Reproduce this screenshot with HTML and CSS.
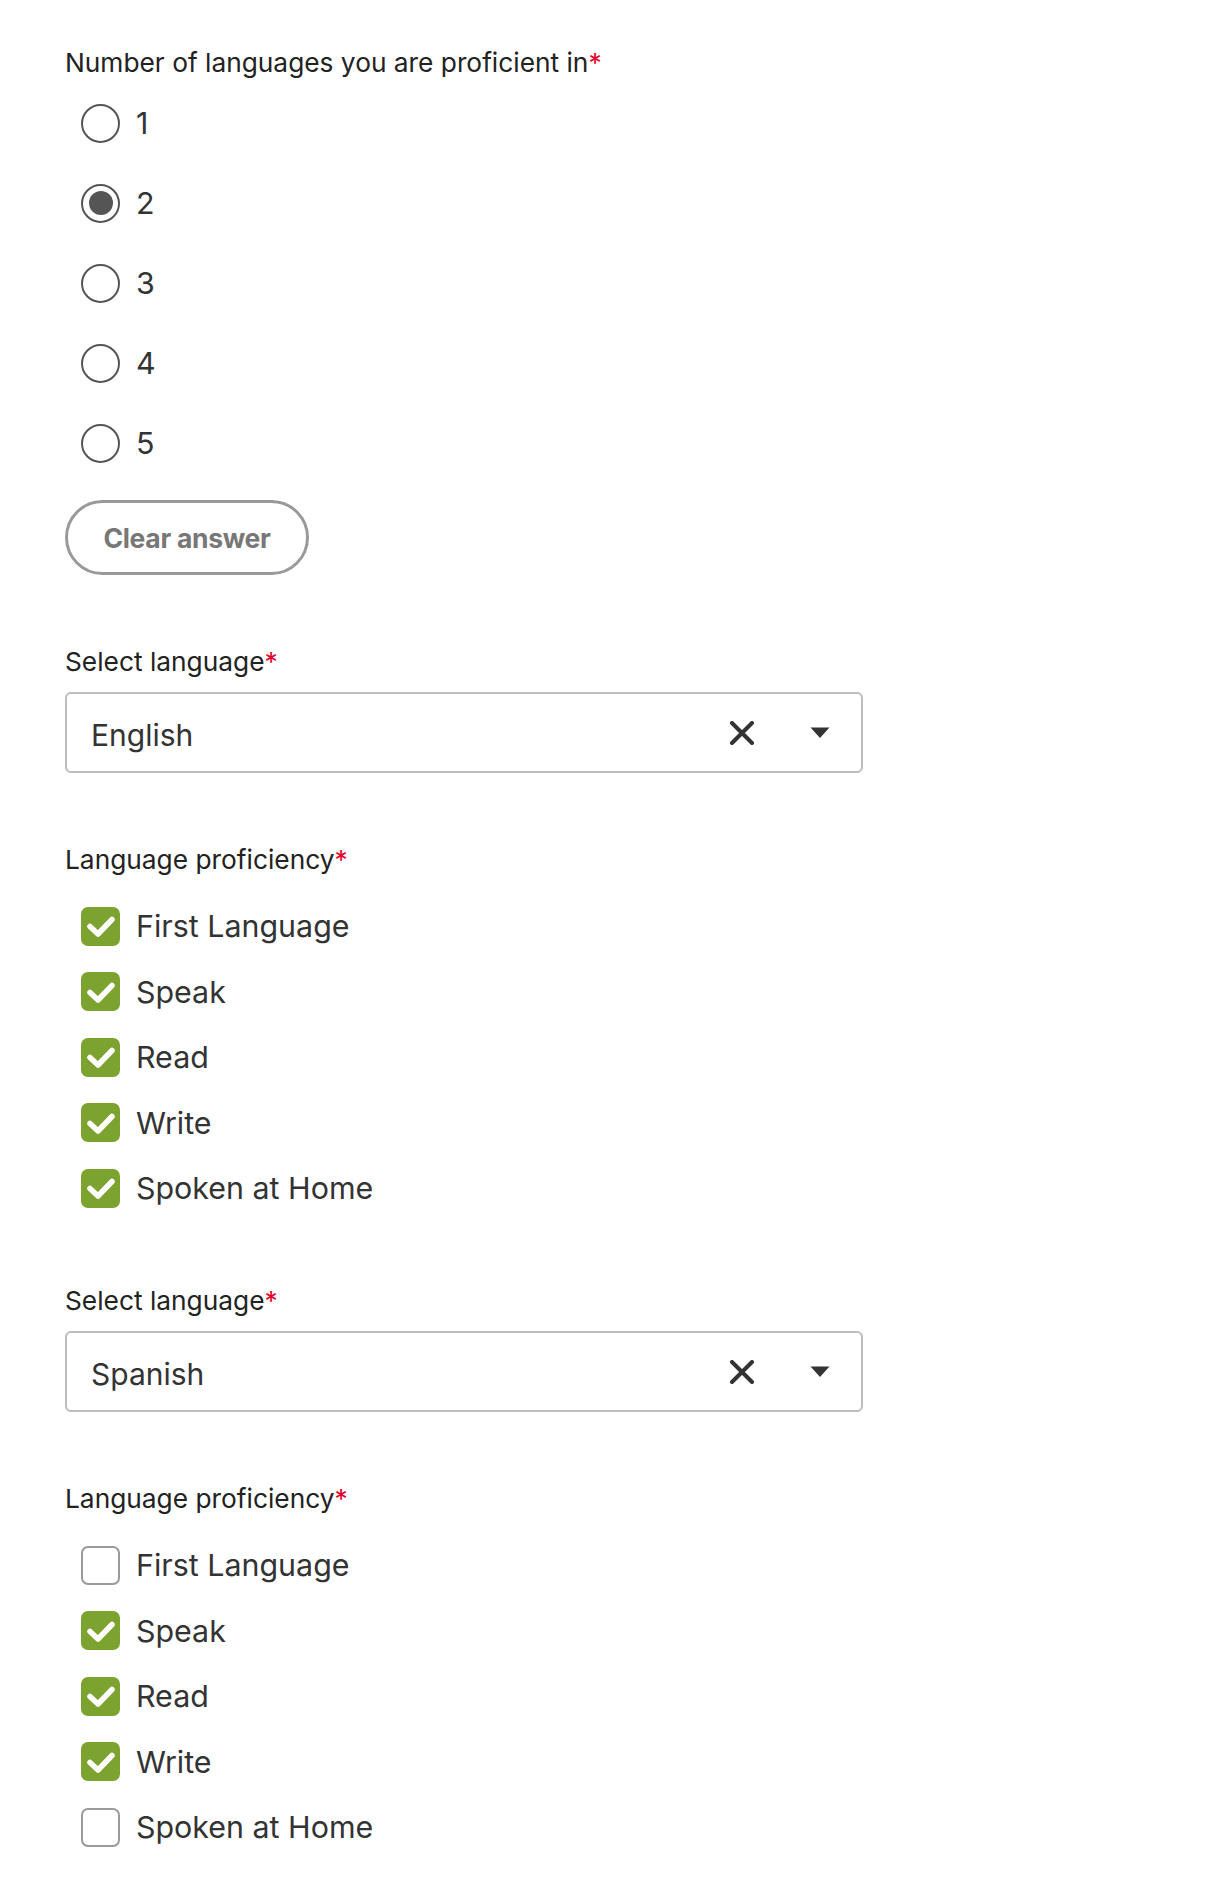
FILE: index.html
```html
<!DOCTYPE html>
<html lang="en">
<head>
<meta charset="utf-8">
<title>Languages</title>
<link rel="stylesheet" href="styles.css">
</head>
<body>
<main class="form">
  <section class="field field-radio">
    <div class="label">Number of languages you are proficient in<span class="req">*</span></div>
    <div class="options radios">
      <label class="opt"><span class="radio"></span><span class="opt-text">1</span></label>
      <label class="opt"><span class="radio checked"></span><span class="opt-text">2</span></label>
      <label class="opt"><span class="radio"></span><span class="opt-text">3</span></label>
      <label class="opt"><span class="radio"></span><span class="opt-text">4</span></label>
      <label class="opt"><span class="radio"></span><span class="opt-text">5</span></label>
    </div>
    <button class="clear-btn" type="button">Clear answer</button>
  </section>

  <section class="field field-select">
    <div class="label">Select language<span class="req">*</span></div>
    <div class="select">
      <span class="select-value">English</span>
      <span class="select-icons">
        <svg class="icon-x" width="26" height="24" viewBox="0 0 26 24"><path d="M3 2 L23 22 M23 2 L3 22" stroke="#333" stroke-width="4" stroke-linecap="round" fill="none"/></svg>
        <svg class="icon-caret" width="20" height="12" viewBox="0 0 20 12"><path d="M0.5 0.5 H19.5 L10 11 Z" fill="#333"/></svg>
      </span>
    </div>
  </section>

  <section class="field field-check">
    <div class="label">Language proficiency<span class="req">*</span></div>
    <div class="options checks">
      <label class="opt"><span class="box checked"><svg viewBox="0 0 40 40" width="40" height="40"><path d="M9 20.5 L17 28 L31 13.5" stroke="#fff" stroke-width="5.5" stroke-linecap="round" stroke-linejoin="round" fill="none"/></svg></span><span class="opt-text">First Language</span></label>
      <label class="opt"><span class="box checked"><svg viewBox="0 0 40 40" width="40" height="40"><path d="M9 20.5 L17 28 L31 13.5" stroke="#fff" stroke-width="5.5" stroke-linecap="round" stroke-linejoin="round" fill="none"/></svg></span><span class="opt-text">Speak</span></label>
      <label class="opt"><span class="box checked"><svg viewBox="0 0 40 40" width="40" height="40"><path d="M9 20.5 L17 28 L31 13.5" stroke="#fff" stroke-width="5.5" stroke-linecap="round" stroke-linejoin="round" fill="none"/></svg></span><span class="opt-text">Read</span></label>
      <label class="opt"><span class="box checked"><svg viewBox="0 0 40 40" width="40" height="40"><path d="M9 20.5 L17 28 L31 13.5" stroke="#fff" stroke-width="5.5" stroke-linecap="round" stroke-linejoin="round" fill="none"/></svg></span><span class="opt-text">Write</span></label>
      <label class="opt"><span class="box checked"><svg viewBox="0 0 40 40" width="40" height="40"><path d="M9 20.5 L17 28 L31 13.5" stroke="#fff" stroke-width="5.5" stroke-linecap="round" stroke-linejoin="round" fill="none"/></svg></span><span class="opt-text">Spoken at Home</span></label>
    </div>
  </section>

  <section class="field field-select">
    <div class="label">Select language<span class="req">*</span></div>
    <div class="select">
      <span class="select-value">Spanish</span>
      <span class="select-icons">
        <svg class="icon-x" width="26" height="24" viewBox="0 0 26 24"><path d="M3 2 L23 22 M23 2 L3 22" stroke="#333" stroke-width="4" stroke-linecap="round" fill="none"/></svg>
        <svg class="icon-caret" width="20" height="12" viewBox="0 0 20 12"><path d="M0.5 0.5 H19.5 L10 11 Z" fill="#333"/></svg>
      </span>
    </div>
  </section>

  <section class="field field-check">
    <div class="label">Language proficiency<span class="req">*</span></div>
    <div class="options checks">
      <label class="opt"><span class="box"></span><span class="opt-text">First Language</span></label>
      <label class="opt"><span class="box checked"><svg viewBox="0 0 40 40" width="40" height="40"><path d="M9 20.5 L17 28 L31 13.5" stroke="#fff" stroke-width="5.5" stroke-linecap="round" stroke-linejoin="round" fill="none"/></svg></span><span class="opt-text">Speak</span></label>
      <label class="opt"><span class="box checked"><svg viewBox="0 0 40 40" width="40" height="40"><path d="M9 20.5 L17 28 L31 13.5" stroke="#fff" stroke-width="5.5" stroke-linecap="round" stroke-linejoin="round" fill="none"/></svg></span><span class="opt-text">Read</span></label>
      <label class="opt"><span class="box checked"><svg viewBox="0 0 40 40" width="40" height="40"><path d="M9 20.5 L17 28 L31 13.5" stroke="#fff" stroke-width="5.5" stroke-linecap="round" stroke-linejoin="round" fill="none"/></svg></span><span class="opt-text">Write</span></label>
      <label class="opt"><span class="box"></span><span class="opt-text">Spoken at Home</span></label>
    </div>
  </section>
</main>
</body>
</html>
```

FILE: styles.css
```css
* { box-sizing: border-box; }
html, body { margin: 0; padding: 0; background: #fff; }
body {
  font-family: Inter, "Noto Sans", "Liberation Sans", sans-serif;
  color: #333;
}
.form {
  padding: 49px 0 40px 65px;
  width: 863px;
  display: flex;
  flex-direction: column;
}
.label {
  font-size: 26.3px;
  line-height: 28px;
  color: #222;
  height: 28px;
  white-space: nowrap;
}
.req { color: #e4002b; }

.options {
  display: flex;
  flex-direction: column;
  padding-left: 16px;
}
.radios { margin-top: 26px; gap: 40px; }
.checks { margin-top: 32px; gap: 25.5px; }

.opt {
  display: flex;
  align-items: center;
  height: 40px;
  gap: 16px;
}
.opt-text {
  font-size: 30.4px;
  line-height: 40px;
  color: #333;
  white-space: nowrap;
}

.radio {
  width: 39px;
  height: 39px;
  border: 2px solid #555;
  border-radius: 50%;
  display: flex;
  align-items: center;
  justify-content: center;
  flex: none;
}
.radio.checked::after {
  content: "";
  width: 24px;
  height: 24px;
  border-radius: 50%;
  background: #555;
}

.clear-btn {
  margin-top: 37px;
  width: 244px;
  height: 75px;
  border: 3px solid #999;
  border-radius: 38px;
  background: #fff;
  color: #777;
  font-family: Inter, "Noto Sans", sans-serif;
  font-weight: 700;
  font-size: 26.5px;
  letter-spacing: -0.3px;
  padding: 0;
}

.field-radio { margin-bottom: 73px; }
.field-select { display: flex; flex-direction: column; }
.field-select .label { margin-bottom: 16px; }
.select {
  width: 798px;
  height: 81px;
  border: 2px solid #bdbdbd;
  border-radius: 6px;
  display: flex;
  align-items: center;
  justify-content: space-between;
  padding: 0 31px 0 24px;
}
.select-value {
  font-size: 30px;
  color: #333;
  line-height: 36px;
  margin-top: 4px;
}
.select-icons {
  display: flex;
  align-items: center;
  gap: 55px;
}
.icon-x { display: block; }
.icon-caret { display: block; }

.field-check { margin-top: 73px; }
.field-check + .field-select { margin-top: 79px; }

.box {
  width: 39px;
  height: 39px;
  border-radius: 7px;
  border: 2px solid #9a9a9a;
  background: #fff;
  flex: none;
  display: flex;
  align-items: center;
  justify-content: center;
  overflow: hidden;
}
.box.checked {
  background: #7ca22f;
  border-color: #7ca22f;
}
.box svg { display: block; flex: none; }
```
